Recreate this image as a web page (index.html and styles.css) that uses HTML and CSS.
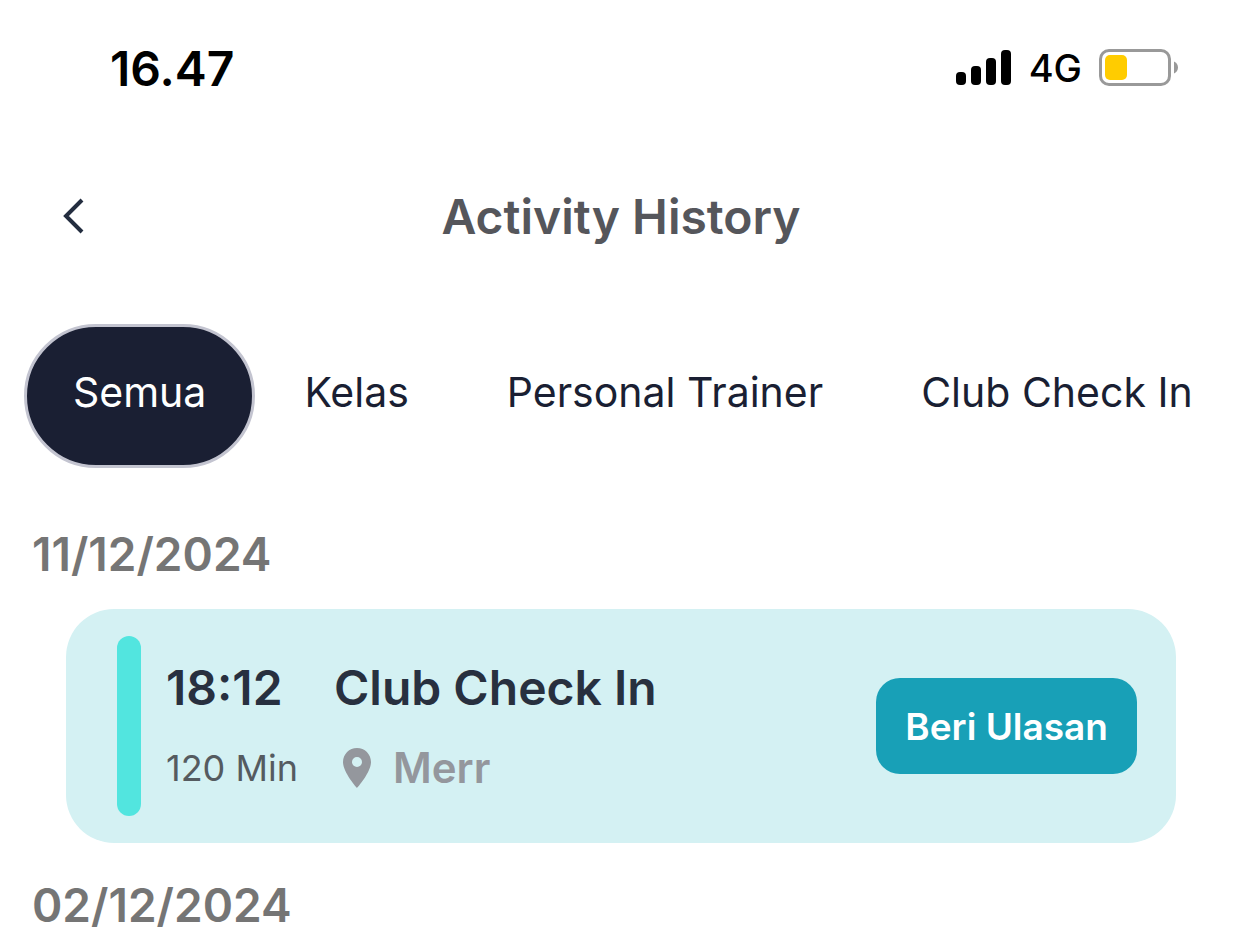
FILE: index.html
```html
<!DOCTYPE html>
<html lang="id">
<head>
    <meta charset="UTF-8">
    <meta name="viewport" content="width=device-width, initial-scale=1.0">
    <title>Activity History</title>
    <link rel="stylesheet" href="styles.css">
</head>
<body>

<div class="status-bar">
    <span class="clock">16.47</span>
    <div class="status-icons">
        <svg class="signal" width="56" height="36" viewBox="0 0 56 36" aria-hidden="true">
            <rect x="0" y="22" width="10" height="13" rx="4"/>
            <rect x="15" y="16" width="10" height="19" rx="4"/>
            <rect x="30" y="8" width="10" height="27" rx="4"/>
            <rect x="45" y="0" width="10" height="35" rx="4"/>
        </svg>
        <span class="network">4G</span>
        <svg class="battery" width="80" height="38" viewBox="0 0 80 38" aria-hidden="true">
            <rect x="1.5" y="1.5" width="69" height="34" rx="8.5" fill="none" stroke="#999" stroke-width="3"/>
            <rect x="6" y="6" width="22" height="25" rx="5" fill="#fc0"/>
            <path d="M75 12.500c2.300 1 4 3.300 4 6s-1.700 5-4 6z" fill="#999"/>
        </svg>
    </div>
</div>

<header class="header">
    <button class="back" aria-label="Kembali">
        <svg width="26" height="36" viewBox="0 0 26 36" aria-hidden="true">
            <path d="M22 2L6 18l16 16" fill="none" stroke="#232d3f" stroke-width="4"/>
        </svg>
    </button>
    <h1>Activity History</h1>
</header>

<nav class="tabs">
    <button class="tab active">Semua</button>
    <button class="tab">Kelas</button>
    <button class="tab">Personal Trainer</button>
    <button class="tab">Club Check In</button>
</nav>

<main class="history">
    <h2 class="date">11/12/2024</h2>
    <article class="card">
        <div class="marker"></div>
        <div class="when">
            <span class="time">18:12</span>
            <span class="duration">120 Min</span>
        </div>
        <div class="what">
            <h3 class="name">Club Check In</h3>
            <div class="place">
                <svg width="30" height="40" viewBox="0 0 30 40" aria-hidden="true">
                    <path fill-rule="evenodd" d="M15 0C7.200 0 1 6.200 1 14c0 10.500 14 26 14 26s14-15.500 14-26C29 6.200 22.800 0 15 0zm0 19a5 5 0 1 1 0-10 5 5 0 0 1 0 10z" fill="#94979d"/>
                </svg>
                <span>Merr</span>
            </div>
        </div>
        <button class="review">Beri Ulasan</button>
    </article>
    <h2 class="date">02/12/2024</h2>
</main>

</body>
</html>
```
FILE: styles.css
```css
* {
    box-sizing: border-box;
}

body {
    margin: 0;
    background: #fff;
    font-family: Inter, "Liberation Sans", sans-serif;
    overflow-x: hidden;
}

h1, h2, h3 {
    margin: 0;
    font-weight: 600;
}

button {
    border: none;
    padding: 0;
    background: none;
    font-family: inherit;
    cursor: pointer;
}

.status-bar {
    display: flex;
    justify-content: space-between;
    align-items: center;
    height: 136px;
    padding: 0 63px 0 110px;
    color: #000;
}

.clock {
    font-size: 48px;
    font-weight: 600;
}

.status-icons {
    display: flex;
    align-items: center;
    gap: 17px;
}

.network {
    font-size: 38px;
    font-weight: 500;
}

.header {
    display: grid;
    grid-template-columns: 40px 1fr 40px;
    align-items: center;
    height: 160px;
    padding: 0 60px;
}

.back {
    display: flex;
}

.header h1 {
    font-size: 48px;
    text-align: center;
    color: #55565b;
}

.tabs {
    display: flex;
    margin-top: 28px;
    padding-left: 24px;
    overflow: hidden;
}

.tab {
    flex-shrink: 0;
    height: 144px;
    padding: 0 46px 8px;
    border: 3px solid transparent;
    border-radius: 72px;
    font-size: 41px;
    color: #1a1f33;
}

.tab.active {
    border-color: #c3c4d0;
    background: #1a1f33;
    color: #fff;
}

.history {
    padding-top: 58px;
}

.date {
    padding-left: 32px;
    font-size: 46px;
    line-height: 56px;
    color: #757575;
}

.card {
    display: flex;
    align-items: center;
    margin: 27px 66px 34px;
    padding: 27px 39px 27px 51px;
    border-radius: 48px;
    background: #d4f1f3;
}

.marker {
    width: 24px;
    height: 180px;
    margin-right: 25px;
    border-radius: 12px;
    background: #52e5df;
}

.when,
.what {
    display: flex;
    flex-direction: column;
    gap: 24px;
    padding-top: 4px;
}

.when {
    width: 168px;
}

.time,
.name {
    font-size: 48px;
    font-weight: 600;
    line-height: 56px;
    color: #28303f;
}

.duration {
    font-size: 36px;
    line-height: 56px;
    color: #555b60;
}

.place {
    display: flex;
    align-items: center;
    gap: 21px;
    padding-left: 8px;
    font-size: 42px;
    font-weight: 600;
    line-height: 56px;
    color: #94979d;
}

.review {
    height: 96px;
    margin-left: auto;
    padding: 0 29px;
    border-radius: 24px;
    background: #18a0b7;
    font-size: 37px;
    font-weight: 600;
    color: #fff;
}
```
